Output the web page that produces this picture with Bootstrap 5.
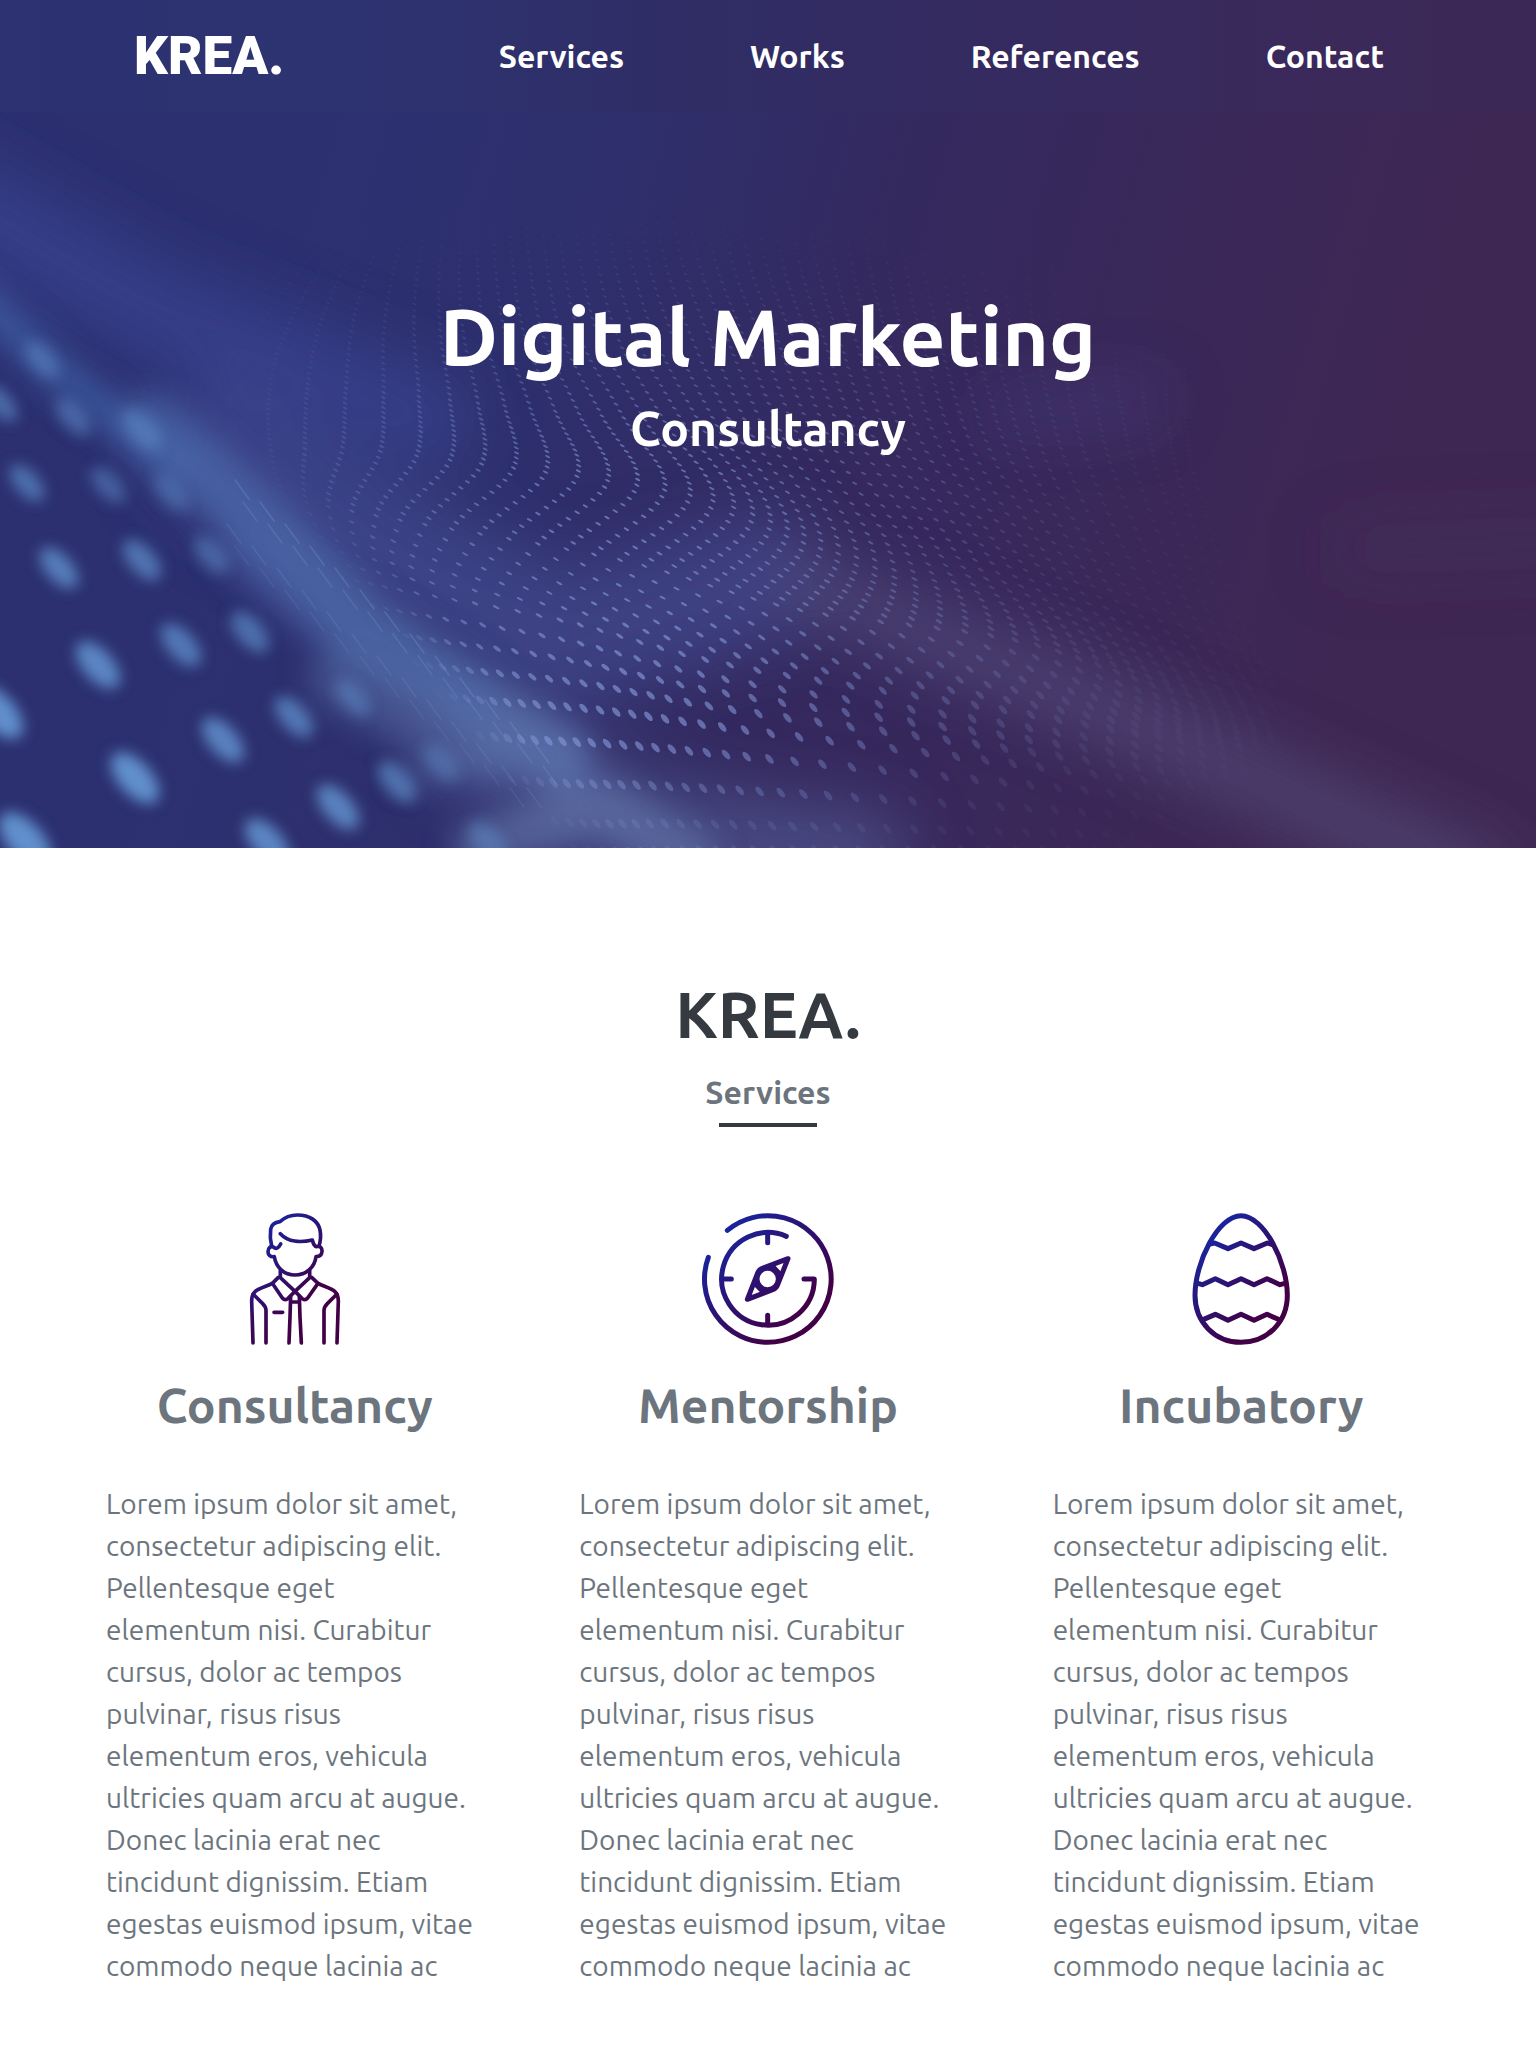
<!DOCTYPE html>
<html lang="en">
<head>
<meta charset="utf-8">
<meta name="viewport" content="width=device-width, initial-scale=1">
<title>KREA. Digital Marketing Consultancy</title>
<link rel="stylesheet" href="https://cdn.jsdelivr.net/npm/bootstrap@5.3.0/dist/css/bootstrap.min.css">
<style>
  body { font-family: Ubuntu, "Noto Sans", "Open Sans", sans-serif; }
  .top-bar { background: linear-gradient(90deg, #2c3272 0%, #2e3370 27%, #2f2d66 42%, #342b61 62%, #3a295a 84%, #3c2856 100%); padding: 32px 89px 32px 134px; }
  .top-bar .navbar-brand { font: 900 53px/48px Roboto, Inter, sans-serif; margin: 0; padding: 0; }
  .top-bar .navbar-nav .nav-link { font-size: 32px; line-height: 48px; font-weight: 700; padding: 0 63px; color: #fff; }
  .hero { isolation: isolate; min-height: 736px; padding-top: 176px; background: #30306b; }
  .hero-art { z-index: -1; }
  .hero h1 { font-size: 80px; line-height: 96px; }
  .hero h2 { font-size: 48px; line-height: 56px; }
  .services { padding: 128px 58px 64px; }
  .services .title { font-size: 64px; line-height: 77px; color: #343a40; margin-bottom: 20px; }
  .services .subtitle { font-size: 32px; line-height: 38px; color: #6c757d; margin-bottom: 12px; }
  .services .rule { width: 98px; height: 4px; background: #343a40; margin-bottom: 86px; }
  .service { padding: 0 48px; color: #6c757d; }
  .service svg { width: 132px; height: 132px; }
  .service h3 { font-size: 48px; line-height: 56px; margin: 32px 0 50px; }
  .service p { font-size: 28px; line-height: 42px; }
  .stroked { fill: none; stroke-width: 15; stroke-linecap: round; stroke-linejoin: round; }
  .stroked-man { stroke: url(#inkMan); stroke-width: 11; }
  .stroked-compass { stroke: url(#inkCompass); }
  .stroked-egg { stroke: url(#inkEgg); }
</style>
<script src="https://cdn.jsdelivr.net/npm/bootstrap@5.3.0/dist/js/bootstrap.bundle.min.js"></script>
</head>
<body>
<header>
  <nav class="navbar navbar-expand top-bar d-flex justify-content-between" aria-label="Main">
    <a class="navbar-brand text-white" href="#">KREA.</a>
    <ul class="navbar-nav">
      <li class="nav-item"><a class="nav-link" href="#services">Services</a></li>
      <li class="nav-item"><a class="nav-link" href="#works">Works</a></li>
      <li class="nav-item"><a class="nav-link" href="#references">References</a></li>
      <li class="nav-item"><a class="nav-link" href="#contact">Contact</a></li>
    </ul>
  </nav>
</header>
<main>
  <section class="hero position-relative overflow-hidden text-center text-white">
    <svg class="hero-art position-absolute top-0 start-0 w-100 h-100" viewBox="0 112 1536 736" preserveAspectRatio="xMidYMid slice" aria-hidden="true">
      <defs>
        <linearGradient id="base" gradientUnits="userSpaceOnUse" x1="280" y1="300" x2="1380" y2="620">
          <stop offset="0" stop-color="#2c3071"/><stop offset=".25" stop-color="#2e2f6c"/><stop offset=".5" stop-color="#34295f"/><stop offset=".75" stop-color="#3a2859"/><stop offset="1" stop-color="#3f2753"/>
        </linearGradient>
        <linearGradient id="ridge" gradientUnits="userSpaceOnUse" x1="0" y1="300" x2="680" y2="850">
          <stop offset="0" stop-color="#4564a8"/><stop offset=".5" stop-color="#5070ad"/><stop offset="1" stop-color="#6074a8"/>
        </linearGradient>
        <filter id="b6" x="-50%" y="-50%" width="200%" height="200%"><feGaussianBlur stdDeviation="7"/></filter>
        <filter id="b14" x="-50%" y="-50%" width="200%" height="200%"><feGaussianBlur stdDeviation="15"/></filter>
        <filter id="b32" x="-50%" y="-50%" width="200%" height="200%"><feGaussianBlur stdDeviation="32"/></filter>
      </defs>
      <rect y="112" width="1536" height="736" fill="url(#base)"/>
      <!-- soft folds of the surface -->
      <g fill="none" stroke-linecap="round" filter="url(#b32)">
        <path d="M-60 190L150 310L330 380L430 420" stroke="#3c4a98" stroke-width="90" opacity=".6"/>
        <path d="M220 450L400 560L560 640L760 580" stroke="#47539a" stroke-width="130" opacity=".55"/>
        <path d="M480 740L640 830L860 860" stroke="#5a69a6" stroke-width="100" opacity=".5"/>
        <path d="M1000 412L1150 400" stroke="#504a90" stroke-width="24" opacity=".6"/>
        <path d="M800 580L1130 720L1300 800L1480 880" stroke="#56507f" stroke-width="54" opacity=".75"/>
        <path d="M1350 550L1600 540" stroke="#4c3a68" stroke-width="40" opacity=".4"/>
      </g>
      <g fill="none" stroke-linecap="round" stroke-linejoin="round" filter="url(#b14)">
        <path d="M-40 280L60 375L180 470" stroke="#4064a8" stroke-width="34" opacity=".75"/>
        <path d="M150 425L260 525L360 625L470 700L560 760" stroke="url(#ridge)" stroke-width="62" opacity=".7"/>
        <path d="M240 550L340 640L470 700" stroke="#4d68ac" stroke-width="50" opacity=".4"/>
        <path d="M340 680L450 735L560 755" stroke="#5a72ac" stroke-width="60" opacity=".5"/>
        <path d="M410 775L500 765" stroke="#5a72ac" stroke-width="24" opacity=".4"/>
        <path d="M480 850L600 805L690 860" stroke="#6278ac" stroke-width="56" opacity=".6"/>
      </g>
      <g id="blobs" fill="#6090cc" filter="url(#b6)"></g>
      <g id="grid" fill="#8496d6"></g>
      <g id="streaks" stroke="#7b9ad2" stroke-width="1.6" stroke-linecap="round" opacity=".5"></g>
    </svg>
    <h1 class="fw-bold mb-3">Digital Marketing</h1>
    <h2 class="fw-bold mb-0">Consultancy</h2>
  </section>

  <section class="services" id="services">
    <div class="d-flex flex-column align-items-center text-center">
      <h2 class="title fw-bold">KREA.</h2>
      <h3 class="subtitle fw-bold">Services</h3>
      <div class="rule"></div>
    </div>
    <div class="row g-0">
      <article class="col-4 service">
        <div class="text-center">
          <svg viewBox="27 68 396 396" aria-hidden="true">
            <defs><linearGradient id="inkMan" gradientUnits="userSpaceOnUse" x1="105" y1="140" x2="285" y2="320"><stop offset="0" stop-color="#1a2399"/><stop offset="1" stop-color="#420046"/></linearGradient></defs>
            <g class="stroked stroked-man">
              <path d="M155 167C150 148 150 133 152 117C154 103 163 96 180 94C193 82 211 74 232 74C270 74 294 92 300 119C303 134 302 151 297 168"/>
              <path d="M181 130C193 143 207 150 224 152C241 155 260 153 277 149C280 160 282 168 290 169C300 165 307 173 306 184C305 194 300 199 288 199C284 231 258 254 225 254C192 254 168 231 163 199C151 201 144 194 144 184C144 172 152 167 160 170C168 177 175 175 182 161"/>
              <path d="M181 240V262L225 303L269 262V240"/>
              <path d="M175 261L157 279L187 323Q194 331 202 326L225 303L248 326Q256 331 263 323L294 279L275 261"/>
              <path d="M157 279C141 288 118 292 106 303C96 312 95 320 95 332L99 458M294 279C309 288 332 292 344 303C354 312 355 320 355 332L351 458"/>
              <path d="M99 311L128 340Q138 350 138 360V458M351 311L322 340Q312 350 312 360V458"/>
              <path d="M212 318L210 380L207 458M238 318L240 380L244 458M213 335H237M162 366H188"/>
            </g>
          </svg>
          <h3 class="fw-bold">Consultancy</h3>
        </div>
        <p class="mb-0">Lorem ipsum dolor sit amet, consectetur adipiscing elit. Pellentesque eget elementum nisi. Curabitur cursus, dolor ac tempos pulvinar, risus risus elementum eros, vehicula ultricies quam arcu at augue. Donec lacinia erat nec tincidunt dignissim. Etiam egestas euismod ipsum, vitae commodo neque lacinia ac</p>
      </article>
      <article class="col-4 service">
        <div class="text-center">
          <svg viewBox="37 39 396 396" aria-hidden="true">
            <defs><linearGradient id="inkCompass" gradientUnits="userSpaceOnUse" x1="120" y1="100" x2="345" y2="330"><stop offset="0" stop-color="#1a2399"/><stop offset="1" stop-color="#420046"/></linearGradient></defs>
            <g class="stroked stroked-compass">
              <path d="M113 91A190 190 0 1 1 56 172"/>
              <path d="M290 109A139 139 0 1 0 374 237H343"/>
              <path d="M234 99V128M234 374V346M98 237H125"/>
              <path d="M295 176L218 205Q208 209 204 219L173 298L249 269Q260 265 264 254Z"/>
              <circle cx="234" cy="237" r="32"/>
              <path d="M253 204L268 220M201 256L215 270"/>
            </g>
          </svg>
          <h3 class="fw-bold">Mentorship</h3>
        </div>
        <p class="mb-0">Lorem ipsum dolor sit amet, consectetur adipiscing elit. Pellentesque eget elementum nisi. Curabitur cursus, dolor ac tempos pulvinar, risus risus elementum eros, vehicula ultricies quam arcu at augue. Donec lacinia erat nec tincidunt dignissim. Etiam egestas euismod ipsum, vitae commodo neque lacinia ac</p>
      </article>
      <article class="col-4 service">
        <div class="text-center">
          <svg viewBox="14 39 396 396" aria-hidden="true">
            <defs><linearGradient id="inkEgg" gradientUnits="userSpaceOnUse" x1="105" y1="140" x2="295" y2="310"><stop offset="0" stop-color="#1a2399"/><stop offset="1" stop-color="#420046"/></linearGradient></defs>
            <g class="stroked stroked-egg">
              <path d="M212 47C143 47 74 188 74 286C74 367 134 427 212 427C290 427 351 367 351 286C351 188 281 47 212 47Z"/>
              <path d="M118 132L133 129L173 146L212 129L251 146L291 129L306 134"/>
              <path d="M82 250L96 254L135 236L173 254L212 236L251 254L290 236L329 254L344 250"/>
              <path d="M100 358L135 343L173 361L212 343L251 361L290 343L324 358"/>
            </g>
          </svg>
          <h3 class="fw-bold">Incubatory</h3>
        </div>
        <p class="mb-0">Lorem ipsum dolor sit amet, consectetur adipiscing elit. Pellentesque eget elementum nisi. Curabitur cursus, dolor ac tempos pulvinar, risus risus elementum eros, vehicula ultricies quam arcu at augue. Donec lacinia erat nec tincidunt dignissim. Etiam egestas euismod ipsum, vitae commodo neque lacinia ac</p>
      </article>
    </div>
  </section>
</main>
<script>
  const NS = 'http://www.w3.org/2000/svg';
  function add(parent, tag, attrs) {
    const el = document.createElementNS(NS, tag);
    for (const k in attrs) el.setAttribute(k, attrs[k]);
    parent.appendChild(el);
  }
  // out-of-focus foreground lights: x, y, size, opacity
  const blobs = [[27,483,.9,.65],[108,485,.9,.5],[171,493,.9,.4],[59,568,1,.8],[142,560,1,.7],[211,555,.9,.5],
    [98,665,1.15,.9],[181,645,1.05,.75],[250,632,1,.65],[-2,712,1.3,1],[135,778,1.25,1],[223,740,1.1,.85],
    [294,717,1,.75],[353,698,.9,.5],[25,840,1.35,1],[267,842,1.15,.9],[338,807,1.1,.85],[397,782,1,.65],
    [441,763,.9,.4],[488,842,1,.5],[42,360,.9,.5],[73,417,.9,.5],[0,403,.9,.6],[142,430,1,.5]];
  const blobLayer = document.getElementById('blobs');
  for (const [x, y, s, o] of blobs)
    add(blobLayer, 'ellipse', { cx: x, cy: y, rx: 25 * s, ry: 13 * s, transform: `rotate(48 ${x} ${y})`, opacity: o });

  // control lines of the dotted wave, left to right, each from far to near
  const steps = [0, 11, 22, 33, 45, 55, 61, 65, 69];
  const lines = [
    [[330,210],[270,270],[220,320],[190,370],[190,430],[240,490],[310,570],[390,690],[470,830]],
    [[450,190],[440,260],[440,330],[450,400],[450,460],[400,520],[400,590],[480,700],[590,850]],
    [[570,180],[580,260],[600,340],[645,420],[690,495],[620,560],[560,620],[600,710],[700,850]],
    [[700,170],[715,260],[745,340],[780,430],[838,545],[800,610],[730,665],[745,730],[860,850]],
    [[840,190],[855,280],[875,350],[905,440],[975,560],[1015,640],[975,705],[985,760],[1070,850]],
    [[1000,240],[1010,320],[1025,390],[1050,470],[1110,590],[1170,690],[1180,740],[1190,785],[1270,850]],
    [[1200,300],[1200,380],[1200,430],[1210,490],[1250,620],[1300,720],[1310,755],[1330,790],[1400,850]]
  ];
  const PER = 8;
  const cr = (a, b, c, d, t) => .5 * (2*b + (c-a)*t + (2*a-5*b+4*c-d)*t*t + (3*b-a-3*c+d)*t*t*t);
  function spline(pts, i, t) {
    const p = k => pts[Math.max(0, Math.min(pts.length - 1, k))];
    return [0, 1].map(n => cr(p(i-1)[n], p(i)[n], p(i+1)[n], p(i+2)[n], t));
  }
  const grid = document.getElementById('grid');
  for (let v = 0; v <= 69; v++) {
    let s = 0;
    while (s < steps.length - 2 && v > steps[s + 1]) s++;
    const t = (v - steps[s]) / (steps[s + 1] - steps[s]);
    const row = lines.map(l => spline(l, s, t));
    for (let u = 0; u < PER * 6; u++) {
      const [x, y] = spline(row, Math.floor(u / PER), (u % PER) / PER);
      const near = Math.max(0, Math.min(1, (y - 200) / 500));
      const fadeX = Math.exp(-Math.pow((x - 620) / (x < 620 ? 300 : 350), 2));
      const fadeTop = Math.pow(Math.min(1, Math.max(0, (y - 170) / 300)), 1.5);
      const fadeLow = y > 740 ? Math.max(.3, 1 - (y - 740) / 120) : 1;
      const crest = Math.max(0, Math.min(1, (x - 215 - Math.max(0, y - 430) * .82) / 70));
      const o = .66 * fadeX * fadeTop * fadeLow * crest;
      if (o < .02) continue;
      const big = y > 600 ? Math.min(1, (y - 600) / 120) : 0;
      add(grid, 'ellipse', { cx: x.toFixed(1), cy: y.toFixed(1), rx: (1.7 + 2.2 * near + 2 * big).toFixed(1),
        ry: (.8 + .4 * near + 1.5 * big).toFixed(1), transform: `rotate(${(28 + 22 * big).toFixed(0)} ${x.toFixed(1)} ${y.toFixed(1)})`, opacity: o.toFixed(2) });
    }
  }
  // thin streaks along the crest
  const streaks = document.getElementById('streaks');
  for (let i = 0; i < 13; i++)
    for (let j = 0; j < 4; j++) {
      const x = 235 + i * 25 - j * 4 + (j % 2) * 12, y = 480 + i * 22 + j * 22;
      if (y < 800) add(streaks, 'line', { x1: x, y1: y, x2: x + 14, y2: y + 19, opacity: .6 - j * .1 });
    }
</script>
</body>
</html>
